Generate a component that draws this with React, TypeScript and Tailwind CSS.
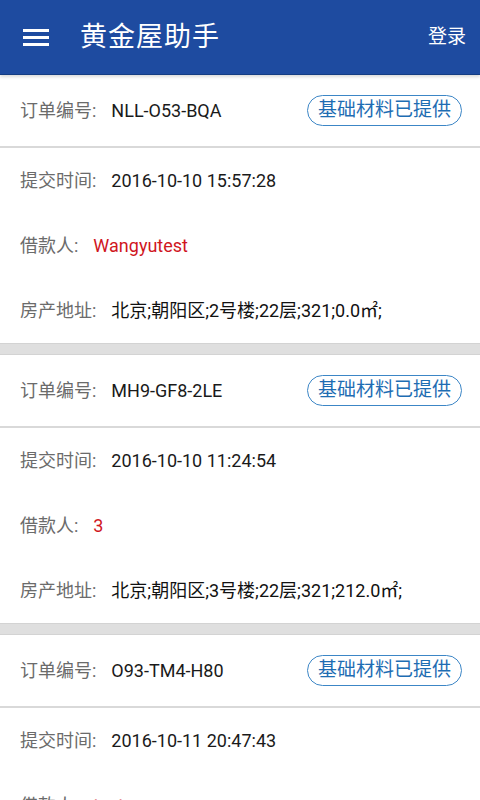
type Order = {
  no: string
  time: string
  borrower: string
  address: string
}

const orders: Order[] = [
  { no: 'NLL-O53-BQA', time: '2016-10-10 15:57:28', borrower: 'Wangyutest', address: '北京;朝阳区;2号楼;22层;321;0.0㎡;' },
  { no: 'MH9-GF8-2LE', time: '2016-10-10 11:24:54', borrower: '3', address: '北京;朝阳区;3号楼;22层;321;212.0㎡;' },
  { no: 'O93-TM4-H80', time: '2016-10-11 20:47:43', borrower: 'test', address: '北京;朝阳区;1号楼;12层;101;90.0㎡;' },
]

function Row({ label, children }: { label: string; children: React.ReactNode }) {
  return (
    <div className="h-[65px] flex items-center px-5 text-[18px]">
      <span className="text-[#6b6b6b] mr-[15px] shrink-0">{label}:</span>
      {children}
    </div>
  )
}

function OrderCard({ order }: { order: Order }) {
  return (
    <div className="bg-white">
      <div className="h-[71px] flex items-center justify-between pl-5 pr-[18px] text-[18px]">
        <div className="flex items-center">
          <span className="text-[#6b6b6b] mr-[15px]">订单编号:</span>
          <span className="text-[#1a1a1a]">{order.no}</span>
        </div>
        <span className="h-[31px] w-[155px] flex items-center justify-center rounded-full border-[1.5px] border-[#3c86c6] text-[#1e6db3] text-[19px]">
          基础材料已提供
        </span>
      </div>
      <div className="h-[2px] bg-[#d9d9d9]" />
      <Row label="提交时间">
        <span className="text-[#1a1a1a]">{order.time}</span>
      </Row>
      <Row label="借款人">
        <span className="text-[#d0161e]">{order.borrower}</span>
      </Row>
      <Row label="房产地址">
        <span className="text-[#111]">{order.address}</span>
      </Row>
      <div className="h-[12px] bg-[#dfdfdf] border-y border-[#d3d3d3]" />
    </div>
  )
}

export default function App() {
  return (
    <div
      className="w-[480px] h-[800px] overflow-hidden bg-white flex flex-col"
      style={{ fontFamily: "Roboto, 'Noto Sans CJK SC', sans-serif" }}
    >
      <header className="relative z-10 h-[75px] shrink-0 bg-[#1e4ba0] border-b border-[#143c82] flex items-center pl-[23px] pr-[14px] shadow-[0_2px_3px_rgba(0,0,0,0.15)]">
        <div className="flex flex-col gap-[4px] w-[26px]">
          <span className="h-[3px] bg-white" />
          <span className="h-[3px] bg-white" />
          <span className="h-[3px] bg-white" />
        </div>
        <h1 className="ml-[31px] text-white text-[27px] tracking-[1px]">黄金屋助手</h1>
        <span className="ml-auto text-white text-[19px]">登录</span>
      </header>
      <main className="flex-1">
        {orders.map((o) => (
          <OrderCard key={o.no} order={o} />
        ))}
      </main>
    </div>
  )
}
